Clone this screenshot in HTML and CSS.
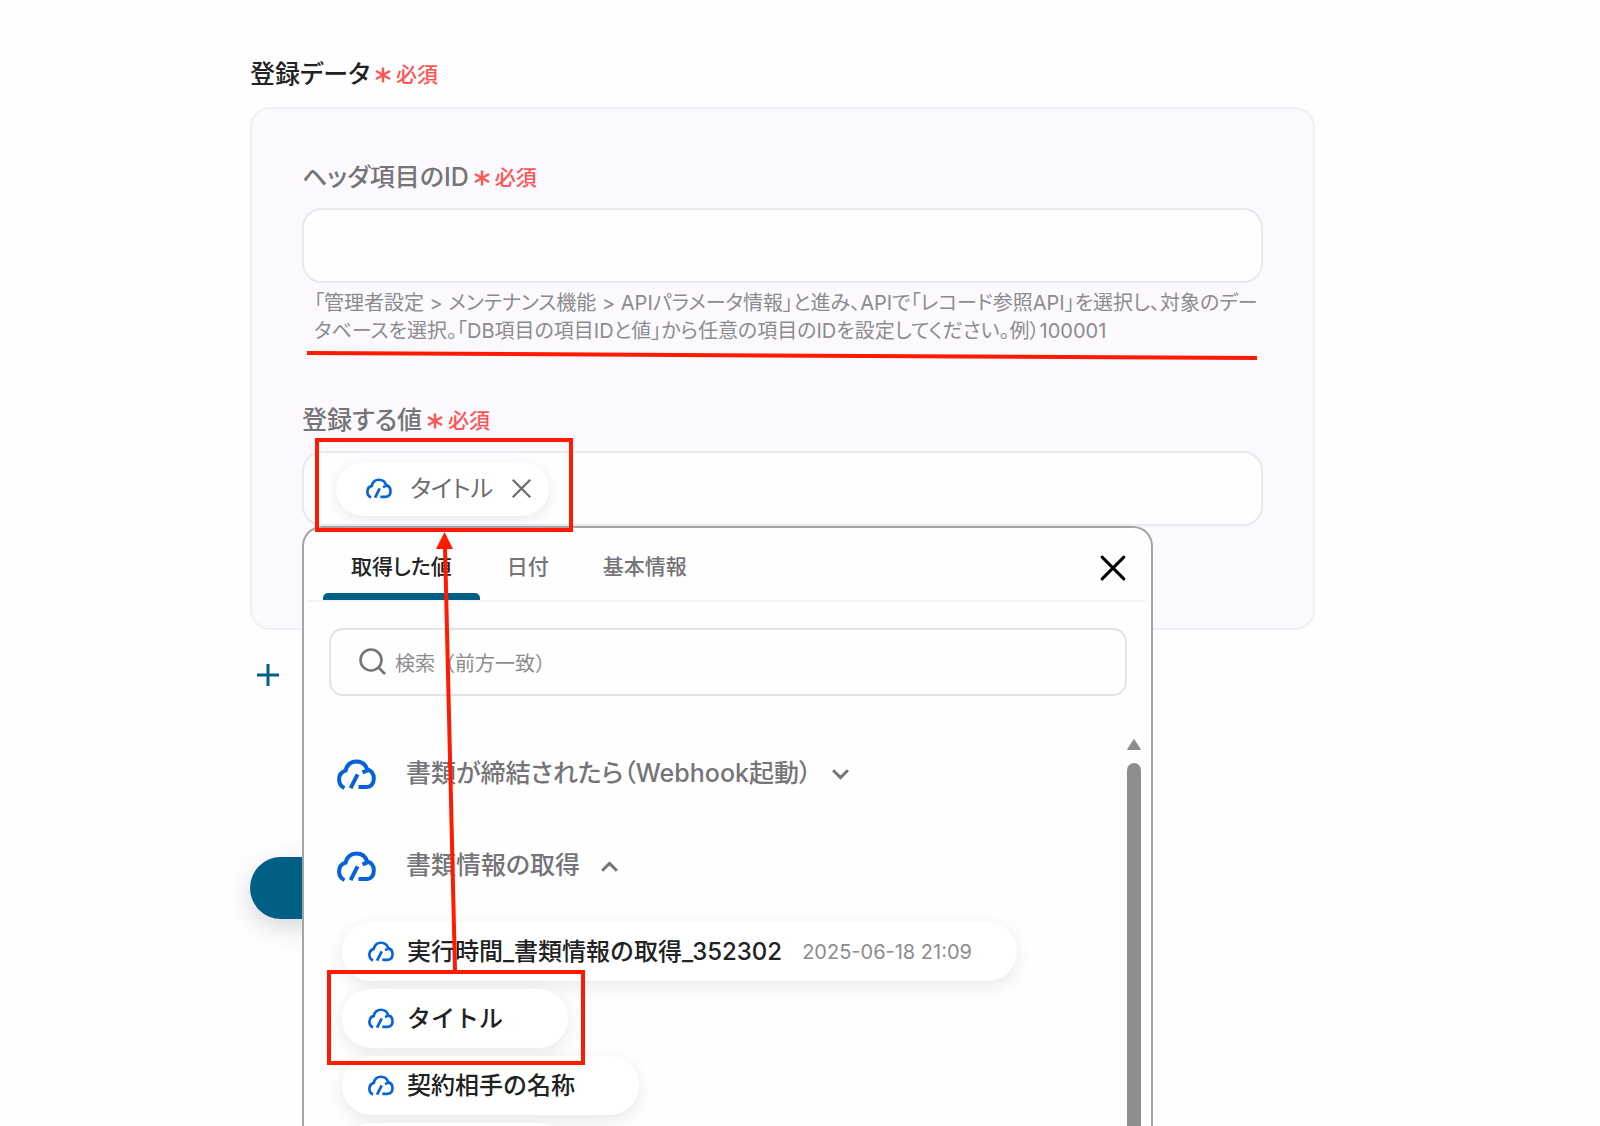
FILE: index.html
```html
<!DOCTYPE html>
<html lang="ja">
<head>
  <meta charset="UTF-8" />
  <title>登録データ</title>
  <link rel="stylesheet" href="styles.css">
</head>
<body>

  <!-- shared icons -->
  <svg class="defs" aria-hidden="true">
    <symbol id="cloud" viewBox="0 0 39 31">
      <path d="M7.5 29C4 27.4 2.1 24 2.1 20.4C2.1 16.3 4.6 12.8 8.6 11.6C10 5.8 14 2.4 19.4 2.4C24.6 2.4 28.6 5.4 30.2 10.4C34.4 11.6 36.8 15 36.8 19.4C36.8 24.8 34 28 29.4 28H21.5M25.5 13.4L31 11.2M20.6 15.4L13.6 29.2" />
    </symbol>
    <symbol id="star" viewBox="0 0 16 16">
      <path d="M8 0.5V15.5M1 4L15 12M15 4L1 12" />
    </symbol>
    <symbol id="cross" viewBox="0 0 24 24">
      <path d="M2 2L22 22M22 2L2 22" />
    </symbol>
  </svg>

  <main class="page">
    <h1 class="label label-main">登録データ <span class="required"><svg class="star"><use href="#star" /></svg>必須</span></h1>

    <section class="card">
      <div class="field">
        <label class="label" for="headerId">ヘッダ項目のID <span class="required"><svg class="star"><use href="#star" /></svg>必須</span></label>
        <input class="box" type="text" id="headerId" />
        <p class="help">「管理者設定 &gt; メンテナンス機能 &gt; APIパラメータ情報」と進み、APIで「レコード参照API」を選択し、対象のデータベースを選択。「DB項目の項目IDと値」から任意の項目のIDを設定してください。例）100001</p>
      </div>

      <div class="field field-value">
        <label class="label" for="value">登録する値 <span class="required"><svg class="star"><use href="#star" /></svg>必須</span></label>
        <div class="box token-box">
          <span class="token">
            <svg class="cloud cloud-sm"><use href="#cloud" /></svg>
            タイトル
            <button class="icon-btn token-remove" aria-label="削除"><svg><use href="#cross" /></svg></button>
          </span>
          <input class="token-input" type="text" id="value" />
        </div>

        <div class="popup">
          <div class="tabs">
            <button class="tab active">取得した値</button>
            <button class="tab">日付</button>
            <button class="tab">基本情報</button>
            <button class="icon-btn popup-close" aria-label="閉じる"><svg><use href="#cross" /></svg></button>
          </div>

          <div class="search">
            <svg class="search-icon" viewBox="0 0 28 28"><circle cx="12" cy="12" r="10.5" /><path d="M19.5 19.5L26 26" /></svg>
            <input type="text" placeholder="検索（前方一致）" aria-label="検索" />
          </div>

          <div class="results">
            <div class="groups">
              <button class="group">
                <svg class="cloud"><use href="#cloud" /></svg>
                <span>書類が締結されたら（Webhook起動）</span>
                <svg class="chevron" viewBox="0 0 18 12"><path d="M2 2L9 9L16 2" /></svg>
              </button>
              <button class="group">
                <svg class="cloud"><use href="#cloud" /></svg>
                <span>書類情報の取得</span>
                <svg class="chevron" viewBox="0 0 18 12"><path d="M2 10L9 3L16 10" /></svg>
              </button>
              <div class="items">
                <button class="item"><svg class="cloud cloud-sm"><use href="#cloud" /></svg>実行時間_書類情報の取得_352302<time>2025-06-18 21:09</time></button>
                <button class="item"><svg class="cloud cloud-sm"><use href="#cloud" /></svg>タイトル</button>
                <button class="item"><svg class="cloud cloud-sm"><use href="#cloud" /></svg>契約相手の名称</button>
                <button class="item" aria-label="次の項目"></button>
              </div>
            </div>
            <div class="scrollbar">
              <svg class="scroll-up" viewBox="0 0 16 13"><path d="M8 1.5L14.5 11.5H1.5Z" /></svg>
              <div class="scroll-thumb"></div>
            </div>
          </div>
        </div>
      </div>
    </section>

    <button class="icon-btn add" aria-label="追加"><svg viewBox="0 0 22 22"><path d="M11 0V22M0 11H22" /></svg></button>
    <button class="submit" aria-label="次へ"></button>
  </main>

  <!-- red marks over the form -->
  <svg class="marks" width="1600" height="1126" aria-hidden="true">
    <path d="M307 353L1257 358" />
    <rect x="317" y="440" width="254" height="90" />
    <rect x="329" y="972" width="254" height="91" />
    <path d="M455 970L445 546" />
    <path class="head" d="M444.5 532L436 549H453Z" />
  </svg>

</body>
</html>
```
FILE: styles.css
```css
* {
  box-sizing: border-box;
}
body {
  margin: 0;
  height: 100vh;
  overflow: hidden;
  position: relative;
  background: #fefefe;
  color: #222;
  font-family: Inter, "Noto Sans CJK JP", sans-serif;
  font-feature-settings: "palt";
  line-height: 1.5;
}
button, input {
  font: inherit;
  font-feature-settings: inherit;
  color: inherit;
}
button {
  border: none;
  padding: 0;
  cursor: pointer;
}
svg {
  display: block;
  flex: none;
  fill: none;
  stroke: currentColor;
}
.defs {
  position: absolute;
  width: 0;
  height: 0;
}
.page {
  padding: 56px 285px 0 250px;
}

/* labels */
.label {
  display: flex;
  align-items: center;
  gap: 5px;
  margin: 0;
  height: 36px;
  font-size: 25px;
  line-height: 36px;
  font-weight: 500;
  color: #757478;
}
.label-main {
  color: #222;
}
.required {
  display: flex;
  align-items: center;
  gap: 5px;
  padding-top: 2px;
  font-size: 21px;
  color: #ff5555;
}
.star {
  width: 16px;
  height: 16px;
  stroke-width: 2.4;
}

/* form card */
.card {
  height: 523px;
  margin-top: 15px;
  padding: 50px 50px 0 50px;
  background: #fbf9fd;
  border: 2px solid #f1eff3;
  border-radius: 20px;
}
.field {
  position: relative;
}
.field-value {
  margin-top: 57px;
}
.box {
  display: block;
  width: 100%;
  height: 75px;
  margin-top: 13px;
  padding: 0 24px;
  background: #fefefe;
  border: 2px solid #e9e8ee;
  border-radius: 20px;
}
.help {
  margin: 6px 0 0;
  padding: 0 0 0 12px;
  font-size: 20px;
  line-height: 28px;
  color: #8c8b90;
}
.token-box {
  display: flex;
  align-items: center;
  padding-left: 32px;
}
.token {
  display: flex;
  align-items: center;
  height: 54px;
  padding: 0 17px 0 30px;
  gap: 18px;
  border-radius: 27px;
  background: #fff;
  box-shadow: 0 3px 12px rgba(60, 40, 70, 0.1);
  font-size: 24px;
  color: #6c6b6f;
}
.token-input {
  flex: 1;
  min-width: 0;
  border: none;
  background: none;
}
.icon-btn {
  background: none;
}
.token-remove svg {
  width: 21px;
  height: 21px;
  stroke-width: 2.6;
}
.cloud {
  width: 39px;
  height: 31px;
  color: #0562d8;
  stroke-width: 4;
}
.cloud-sm {
  width: 26px;
  height: 21px;
}

/* value picker */
.popup {
  position: absolute;
  top: 124px;
  left: 0;
  right: 110px;
  height: 602px;
  overflow: hidden;
  background: #fefefe;
  border: 2px solid #a5a4a6;
  border-bottom: none;
  border-radius: 20px 20px 0 0;
}
.tabs {
  display: flex;
  height: 74px;
  margin: 0 5px;
  padding: 0 20px 0 14px;
  border-bottom: 2px solid #f3f2f5;
}
.tab {
  position: relative;
  height: 72px;
  padding: 5px 27px 0;
  background: none;
  font-size: 21px;
  font-weight: 500;
  color: #757478;
}
.tab.active {
  padding: 5px 28px 0;
  color: #222;
}
.tab.active::after {
  content: "";
  position: absolute;
  left: 0;
  right: 0;
  bottom: 0;
  height: 7px;
  border-radius: 5px 5px 0 0;
  background: #005f85;
}
.popup-close {
  margin: 8px 0 0 auto;
  color: #000;
}
.popup-close svg {
  width: 26px;
  height: 26px;
  stroke-width: 2.8;
  stroke-linecap: round;
}
.search {
  display: flex;
  align-items: center;
  gap: 8px;
  height: 68px;
  margin: 26px 24px 0 25px;
  padding: 0 28px;
  border: 2px solid #e3e2e6;
  border-radius: 14px;
  color: #757478;
}
.search-icon {
  width: 28px;
  height: 28px;
  stroke-width: 2.6;
}
.search input {
  flex: 1;
  min-width: 0;
  padding: 4px 0 0;
  border: none;
  background: none;
  font-size: 20px;
  font-feature-settings: normal;
}
.search input::placeholder {
  color: #8c8b90;
}
.results {
  display: flex;
  justify-content: space-between;
  margin: 42px 9px 0 33px;
}
.group {
  display: flex;
  align-items: center;
  height: 36px;
  margin-bottom: 56px;
  margin-top: 18px;
  background: none;
  font-size: 25px;
  font-weight: 500;
  color: #757478;
}
.group + .group {
  margin-top: 0;
}
.group span {
  margin: 0 20px 0 30px;
}
.chevron {
  width: 19px;
  height: 13px;
  stroke-width: 2.8;
}
.items {
  display: flex;
  flex-direction: column;
  align-items: flex-start;
  gap: 8px;
  margin: -18px 0 0 5px;
}
.item {
  display: flex;
  align-items: center;
  height: 59px;
  min-width: 226px;
  padding: 0 64px 0 26px;
  border-radius: 30px;
  background: #fff;
  box-shadow: 0 5px 16px rgba(60, 40, 70, 0.1);
  font-size: 24px;
  font-weight: 500;
  font-feature-settings: normal;
  color: #222;
}
.item .cloud {
  margin-right: 13px;
}
.item:first-child {
  padding-right: 45px;
}
.item time {
  margin-left: 20px;
  font-size: 20px;
  font-weight: 400;
  color: #8c8b90;
}
.scrollbar {
  width: 16px;
  color: #8d8c8e;
}
.scroll-up {
  width: 16px;
  height: 13px;
  fill: currentColor;
  stroke-linejoin: round;
}
.scroll-thumb {
  width: 14px;
  height: 370px;
  margin: 12px 1px 0;
  border-radius: 7px 7px 0 0;
  background: currentColor;
}

/* page actions */
.add {
  display: block;
  margin: 34px 0 0 7px;
  color: #005f85;
}
.add svg {
  width: 22px;
  height: 22px;
  stroke-width: 3;
}
.submit {
  display: block;
  width: 240px;
  height: 62px;
  margin-top: 171px;
  border-radius: 31px;
  background: #005f85;
  box-shadow: 0 8px 24px rgba(60, 60, 80, 0.2);
}

.marks {
  position: absolute;
  top: 0;
  left: 0;
  color: #ff1a00;
  stroke-width: 4;
  pointer-events: none;
}
.marks .head {
  fill: currentColor;
  stroke: none;
}
```
